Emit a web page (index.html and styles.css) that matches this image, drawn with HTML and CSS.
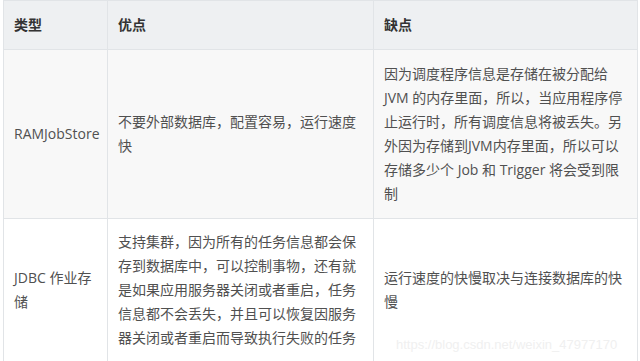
FILE: index.html
```html
<!DOCTYPE html>
<html lang="zh">
<head>
<meta charset="utf-8">
<link rel="stylesheet" href="styles.css">
</head>
<body>
<div class="page">
  <table class="grid">
    <colgroup>
      <col class="c1">
      <col class="c2">
      <col class="c3">
    </colgroup>
    <thead>
      <tr>
        <th>类型</th>
        <th>优点</th>
        <th>缺点</th>
      </tr>
    </thead>
    <tbody>
      <tr class="odd">
        <td>RAMJobStore</td>
        <td>不要外部数据库，配置容易，运行速度快</td>
        <td>因为调度程序信息是存储在被分配给 JVM 的内存里面，所以，当应用程序停止运行时，所有调度信息将被丢失。另外因为存储到JVM内存里面，所以可以存储多少个 Job 和 Trigger 将会受到限制</td>
      </tr>
      <tr class="even">
        <td>JDBC 作业存储</td>
        <td>支持集群，因为所有的任务信息都会保存到数据库中，可以控制事物，还有就是如果应用服务器关闭或者重启，任务信息都不会丢失，并且可以恢复因服务器关闭或者重启而导致执行失败的任务</td>
        <td>运行速度的快慢取决与连接数据库的快慢</td>
      </tr>
    </tbody>
  </table>
  <div class="watermark">https://blog.csdn.net/weixin_47977170</div>
</div>
</body>
</html>
```
FILE: styles.css
```css
html, body {
  margin: 0;
  padding: 0;
  background: #ffffff;
}
.page {
  position: relative;
  width: 640px;
  height: 361px;
  padding: 0 3px;
  box-sizing: border-box;
  overflow: hidden;
}
.grid {
  border-collapse: collapse;
  table-layout: fixed;
  width: 634px;
  font-family: "Open Sans", "Noto Sans CJK SC", sans-serif;
  font-size: 14px;
  line-height: 24px;
  color: #505050;
}
.c1 { width: 104px; }
.c2 { width: 266px; }
.c3 { width: 264px; }
.grid th,
.grid td {
  border: 1px solid #e1e4e7;
  padding: 12px 10px;
  text-align: left;
  vertical-align: middle;
  word-break: normal;
  line-break: strict;
}
.grid th {
  background: #eef0f2;
  color: #333333;
  font-weight: 700;
}
.grid tr.odd td {
  background: #f8f8f8;
  height: 144px;
}
.grid tr.even td {
  background: #ffffff;
  padding: 11px 10px;
}
.watermark {
  position: absolute;
  left: 396px;
  top: 337px;
  font-family: "Liberation Sans", sans-serif;
  font-size: 13px;
  color: #f0f0f0;
  white-space: nowrap;
}
```
